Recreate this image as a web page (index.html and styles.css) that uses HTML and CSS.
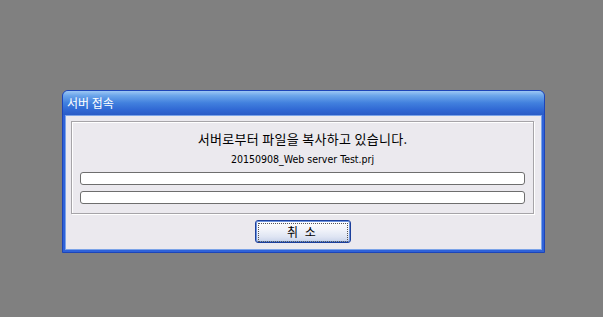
FILE: index.html
```html
<!DOCTYPE html>
<html>
    <head>
        <title>서버 접속</title>
        <link rel="stylesheet" href="styles.css">
    </head>
    <body>
        <div class="window">
            <div class="titlebar">서버 접속</div>
            <div class="client">
                <div class="group">
                    <div class="message">서버로부터 파일을 복사하고 있습니다.</div>
                    <div class="filename">20150908_Web server Test.prj</div>
                    <div class="progress"></div>
                    <div class="progress"></div>
                </div>
                <div class="buttons">
                    <button class="cancel"><span>취 소</span></button>
                </div>
            </div>
        </div>
    </body>
</html>
```

FILE: styles.css
```css
body {
    background-color: #808080;
    margin: 0;
    padding: 90px 0 0 62px;
    font-family: "Noto Sans CJK KR", "DejaVu Sans", sans-serif;
}

.window {
    width: 483px;
    height: 163px;
    box-sizing: border-box;
    display: flex;
    flex-direction: column;
    background: #2f62d8;
    border: 1px solid #1d45b8;
    border-radius: 6px 6px 0 0;
}

.titlebar {
    height: 24px;
    box-sizing: border-box;
    padding: 5px 0 0 4px;
    color: #fff;
    font-size: 12px;
    line-height: 14px;
    border-radius: 5px 5px 0 0;
    background: linear-gradient(#9cc7f4 0%, #6aa4ea 20%, #4180de 50%, #3068d4 78%, #2a5bc6 100%);
}

.client {
    flex: 1;
    margin: 0 2px 2px 2px;
    border: 1px solid #7ba3e8;
    background-color: #ebe9ee;
    display: flex;
    flex-direction: column;
    padding: 5px 7px 0 5px;
}

.group {
    height: 93px;
    box-sizing: border-box;
    border: 1px solid #a6a4a8;
    box-shadow: 1px 1px 0 #fff, inset 1px 1px 0 #fff;
    padding: 8px 8px 0 8px;
}

.message {
    text-align: center;
    font-size: 13px;
    letter-spacing: 0.3px;
    line-height: 17px;
    color: #000;
}

.filename {
    text-align: center;
    font-family: "DejaVu Sans Condensed", "DejaVu Sans", sans-serif;
    font-size: 10.5px;
    line-height: 14px;
    margin-top: 5px;
    color: #000;
}

.progress {
    height: 13px;
    box-sizing: border-box;
    margin-top: 6px;
    background: #fff;
    border: 1px solid #6e6e6e;
    border-radius: 3px;
}

.filename + .progress {
    margin-top: 6px;
}

.buttons {
    display: flex;
    justify-content: center;
    padding-top: 6px;
}

.cancel {
    width: 96px;
    height: 23px;
    padding: 2px;
    border: 1px solid #1c3f9b;
    border-radius: 3px;
    background: linear-gradient(#fff 0%, #f2f4fa 40%, #dfe5f3 75%, #c7d2ea 100%);
    box-shadow: inset 0 0 0 1px #6d94df;
    font-family: "Noto Sans CJK KR", sans-serif;
    font-size: 12px;
    letter-spacing: 2px;
    color: #000;
}

.cancel span {
    display: block;
    height: 100%;
    line-height: 15px;
    border: 1px dotted #555;
}
```
